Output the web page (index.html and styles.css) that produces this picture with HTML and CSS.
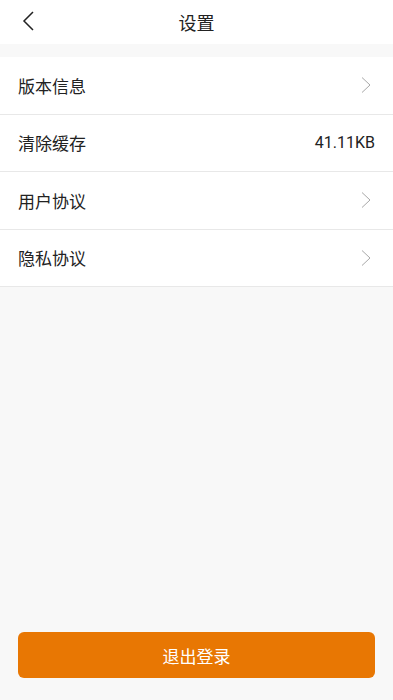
FILE: index.html
```html
<!DOCTYPE html>
<html lang="zh">
<head>
<meta charset="utf-8">
<link rel="stylesheet" href="styles.css">
</head>
<body>
<div class="page">
  <header class="nav">
    <svg class="back" width="12" height="20" viewBox="0 0 12 20"><path d="M11 1 L2 10 L11 19" fill="none" stroke="#222" stroke-width="1.5"/></svg>
    <div class="title">设置</div>
  </header>
  <ul class="list">
    <li class="row"><span class="label">版本信息</span><svg class="chev" width="10" height="16" viewBox="0 0 10 16"><path d="M1 0.5 L9 8 L1 15.5" fill="none" stroke="#a8a8a8" stroke-width="1"/></svg></li>
    <li class="row"><span class="label">清除缓存</span><span class="value">41.11KB</span></li>
    <li class="row"><span class="label">用户协议</span><svg class="chev" width="10" height="16" viewBox="0 0 10 16"><path d="M1 0.5 L9 8 L1 15.5" fill="none" stroke="#a8a8a8" stroke-width="1"/></svg></li>
    <li class="row"><span class="label">隐私协议</span><svg class="chev" width="10" height="16" viewBox="0 0 10 16"><path d="M1 0.5 L9 8 L1 15.5" fill="none" stroke="#a8a8a8" stroke-width="1"/></svg></li>
  </ul>
  <div class="spacer"></div>
  <div class="footer">
    <button class="logout">退出登录</button>
  </div>
</div>
</body>
</html>
```
FILE: styles.css
```css
* { box-sizing: border-box; }
html, body { margin: 0; padding: 0; }
body {
  background: #f8f8f8;
  font-family: "Noto Sans CJK SC", "Noto Sans", sans-serif;
  color: #222;
}
.page {
  display: flex;
  flex-direction: column;
  height: 700px;
}
.nav {
  position: relative;
  height: 44px;
  background: #fff;
  display: flex;
  align-items: center;
  justify-content: center;
}
.back {
  position: absolute;
  left: 22px;
  top: 11px;
}
.title {
  font-size: 18px;
  color: #222;
  line-height: 44px;
}
.list {
  list-style: none;
  margin: 13px 0 0;
  padding: 0;
  background: #fff;
}
.row {
  height: 57.5px;
  border-bottom: 1px solid #e8e8e8;
  display: flex;
  align-items: center;
  justify-content: space-between;
  padding: 0 18px;
}
.label {
  font-size: 17px;
  color: #222;
}
.value {
  font-family: "Roboto", "Noto Sans", sans-serif;
  font-size: 16px;
  color: #222;
}
.chev {
  margin-right: 4px;
}
.spacer { flex: 1; }
.footer {
  padding: 0 18px 22px;
}
.logout {
  display: block;
  width: 100%;
  height: 46px;
  border: none;
  border-radius: 6px;
  background: #e87703;
  color: #fff;
  font-family: "Noto Sans CJK SC", sans-serif;
  font-size: 17px;
}
```
